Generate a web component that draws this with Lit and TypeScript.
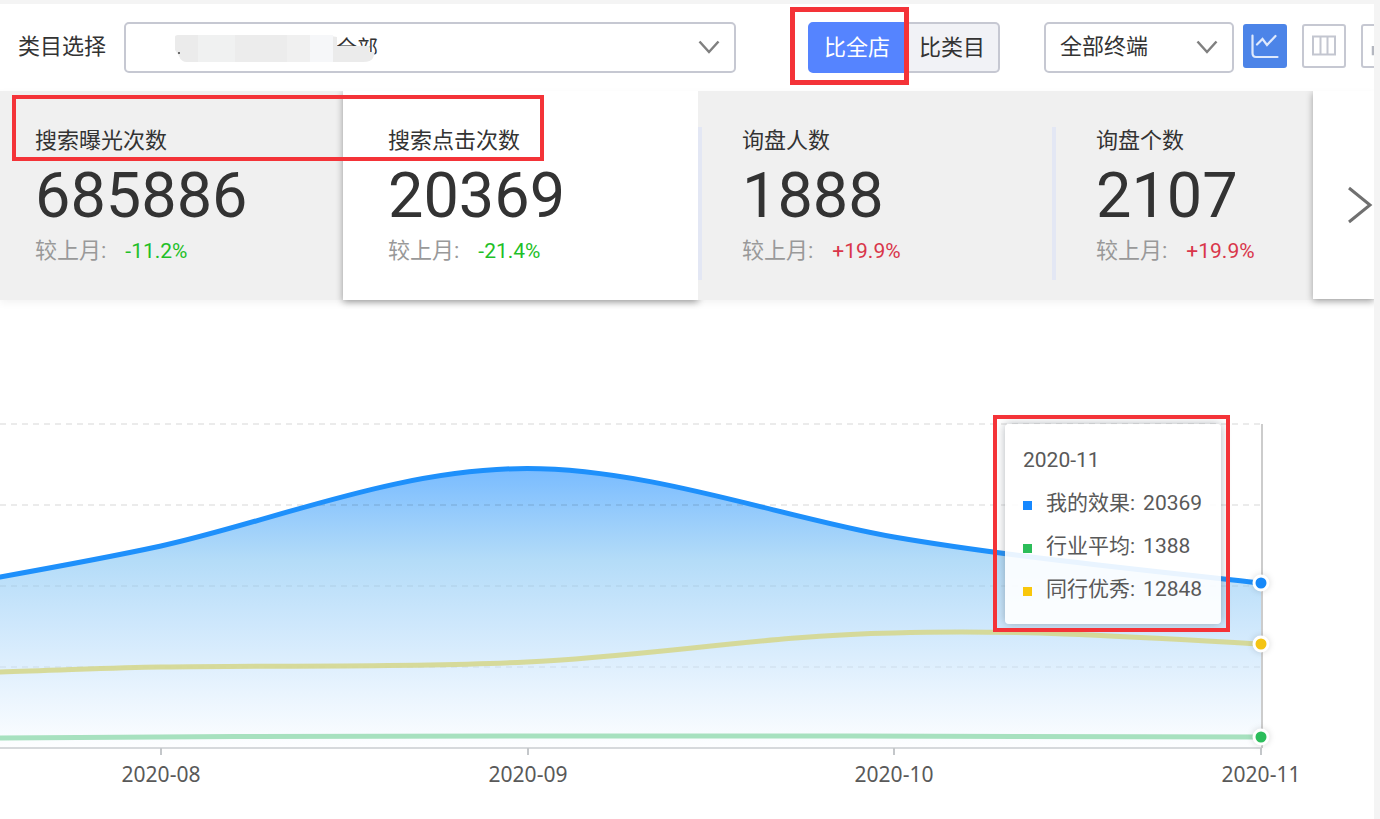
import { LitElement, html, css, svg } from "lit";
import { customElement, state } from "lit/decorators.js";

interface Metric {
  label: string;
  value: string;
  change: string;
}

const METRICS: Metric[] = [
  { label: "搜索曝光次数", value: "685886", change: "-11.2%" },
  { label: "搜索点击次数", value: "20369", change: "-21.4%" },
  { label: "询盘人数", value: "1888", change: "+19.9%" },
  { label: "询盘个数", value: "2107", change: "+19.9%" },
];

const SERIES = [
  { name: "我的效果", value: 20369, tone: "mine" },
  { name: "行业平均", value: 1388, tone: "average" },
  { name: "同行优秀", value: 12848, tone: "top" },
];

const MONTHS = [
  { label: "2020-08", x: 161 },
  { label: "2020-09", x: 528 },
  { label: "2020-10", x: 894 },
  { label: "2020-11", x: 1261 },
];

const MINE_CURVE =
  "M-2 577.5L0 577C50 568 110 557 161 546C271 522 397 468.5 527 468.5C650 468.5 784 518 894 537C1004 556 1150 571 1261 583";

const FONT = css`
  :host {
    font-family: Roboto, "Noto Sans CJK SC", sans-serif;
    font-size: 22px;
    color: #333;
  }
  * {
    box-sizing: border-box;
  }
`;

@customElement("metric-chart")
class MetricChart extends LitElement {
  static styles = [
    FONT,
    css`
      :host {
        display: block;
        position: relative;
      }
      .plot {
        display: block;
        width: 100%;
        height: auto;
      }
      .grid {
        stroke: #000;
        stroke-opacity: 0.08;
        stroke-width: 2;
        stroke-dasharray: 6 5;
      }
      .grid.faint {
        stroke-opacity: 0.04;
      }
      .axis {
        stroke: #d6d9dc;
        stroke-width: 2;
      }
      .tick {
        stroke: #c4c7ca;
        stroke-width: 2;
      }
      .cursor {
        stroke: #ccc;
        stroke-width: 2;
      }
      .line {
        fill: none;
        stroke-width: 5;
      }
      .line.mine {
        stroke: #1e90fb;
      }
      .line.average {
        stroke: #a7e1bf;
      }
      .line.top {
        stroke: #d5d78f;
        stroke-opacity: 0.9;
      }
      .dot {
        stroke: #fff;
        stroke-width: 3;
        filter: drop-shadow(0 0 3px rgba(0, 0, 0, 0.15));
      }
      .dot.mine {
        fill: #1688f8;
      }
      .dot.top {
        fill: #f4c413;
      }
      .dot.average {
        fill: #2bbd5b;
      }
      .month {
        font-family: "Noto Sans", sans-serif;
        font-size: 21px;
        fill: #595959;
        text-anchor: middle;
      }
      .tooltip {
        position: absolute;
        top: 124px;
        right: 153px;
        width: 216px;
        padding: 15px 18px 13px;
        border-radius: 4px;
        background: rgba(255, 255, 255, 0.9);
        box-shadow: 0 0 10px rgba(100, 110, 120, 0.5);
        font-size: 21px;
        line-height: 43px;
        color: #595959;
      }
      .mark {
        position: absolute;
        inset: -9px -9px -8px -12px;
        border: 4px solid #f43338;
        pointer-events: none;
      }
      .rows {
        margin: 0;
        padding: 0;
        list-style: none;
      }
      .row {
        display: flex;
        align-items: center;
        white-space: nowrap;
      }
      .swatch {
        width: 9px;
        height: 9px;
        margin: 4px 14px 0 0;
      }
      .swatch.mine {
        background: #1688ff;
      }
      .swatch.average {
        background: #2cbd59;
      }
      .swatch.top {
        background: #f9c70c;
      }
      .amount {
        margin-left: 8px;
      }
    `,
  ];

  render() {
    return html`
      <svg class="plot" viewBox="0 300 1374 519" role="img" aria-label="搜索点击次数">
        <defs>
          <linearGradient id="fade" gradientUnits="userSpaceOnUse" x1="0" y1="468" x2="0" y2="748">
            <stop offset="0" stop-color="#78bbff" />
            <stop offset="0.33" stop-color="#b4dcf8" />
            <stop offset="0.55" stop-color="#cde7fc" />
            <stop offset="0.8" stop-color="#e9f4fe" />
            <stop offset="1" stop-color="#fdfeff" />
          </linearGradient>
        </defs>
        <path d="${MINE_CURVE}V748H-2Z" fill="url(#fade)" />
        <line class="grid" x1="0" y1="424" x2="1261" y2="424" />
        <line class="grid" x1="0" y1="505" x2="1261" y2="505" />
        <line class="grid faint" x1="0" y1="586" x2="1261" y2="586" />
        <line class="grid faint" x1="0" y1="667" x2="1261" y2="667" />
        <line class="axis" x1="0" y1="748" x2="1262" y2="748" />
        ${MONTHS.map(
          (m) => svg`
            <line class="tick" x1=${m.x} y1="748" x2=${m.x} y2="755" />
            <text class="month" x=${m.x} y="782">${m.label}</text>`
        )}
        <path
          class="line top"
          d="M-2 672C50 671 110 667.500 161 667C283 665 405 668 527 662C650 656 772 635 894 633C1016 629 1139 637 1261 644"
        />
        <path class="line average" d="M-2 738C160 736.500 380 736 527 736C780 736 1000 736 1261 737" />
        <path class="line mine" d=${MINE_CURVE} />
        <line class="cursor" x1="1262" y1="424" x2="1262" y2="748" />
        <circle class="dot mine" cx="1261" cy="583" r="7" />
        <circle class="dot top" cx="1261" cy="644" r="7" />
        <circle class="dot average" cx="1261" cy="737" r="7" />
      </svg>
      <div class="tooltip">
        <div>2020-11</div>
        <ul class="rows">
          ${SERIES.map(
            (s) => html`<li class="row">
              <span class="swatch ${s.tone}"></span><span>${s.name}:</span
              ><span class="amount">${s.value}</span>
            </li>`
          )}
        </ul>
        <span class="mark"></span>
      </div>
    `;
  }
}

@customElement("app-root")
class AppRoot extends LitElement {
  @state() scope = "store";

  static styles = [
    FONT,
    css`
      :host {
        display: block;
        min-height: 100vh;
        padding: 4px 6px 0 0;
        background: #f4f4f4;
      }
      .panel {
        min-height: calc(100vh - 4px);
        overflow: hidden;
        background: #fff;
      }
      select,
      button {
        font: inherit;
        color: inherit;
        margin: 0;
        cursor: pointer;
      }
      .toolbar {
        display: flex;
        align-items: center;
        height: 87px;
        padding-left: 18px;
        margin-right: -31px;
        white-space: nowrap;
      }
      .category-label {
        margin-right: 18px;
        padding-bottom: 8px;
      }
      .picker {
        position: relative;
        width: 190px;
        margin-right: 9px;
      }
      .picker.category {
        flex: 1;
        margin-right: 72px;
      }
      .select {
        display: block;
        width: 100%;
        height: 51px;
        padding: 0 40px 3px 14px;
        border: 2px solid #c6c8d2;
        border-radius: 5px;
        background: #fff;
        appearance: none;
      }
      .category .select {
        padding: 0 40px 0 210px;
        font-size: 21px;
      }
      .arrow {
        position: absolute;
        top: 18px;
        right: 16px;
        pointer-events: none;
      }
      .smudge {
        position: absolute;
        top: 12px;
        left: 51px;
        pointer-events: none;
      }
      .toggle {
        position: relative;
        display: flex;
        margin-right: 44px;
      }
      .option {
        height: 51px;
        padding: 0 13px 6px;
        border: 2px solid #c6c8d2;
        border-left: 0;
        border-radius: 0 5px 5px 0;
        background: #f1f2f6;
      }
      .option:first-child {
        padding: 0 14px 6px;
        border: 2px solid #5584ff;
        border-radius: 5px 0 0 5px;
      }
      .option[aria-pressed="true"] {
        color: #fff;
        background: #5584ff;
      }
      .mark {
        position: absolute;
        border: 4px solid #f43338;
        pointer-events: none;
      }
      .toggle .mark {
        inset: -15px 91px -12px -18px;
        border-width: 5px;
      }
      .views {
        display: flex;
        gap: 15px;
        margin-bottom: 3px;
      }
      .view {
        width: 44px;
        height: 44px;
        padding: 0;
        border: 2px solid #c6c8d2;
        border-radius: 3px;
        background: #fff;
      }
      .view.active {
        border-color: #4c84e8;
        background: #4c84e8;
      }
      .view svg {
        display: block;
      }
      .cards {
        position: relative;
        display: grid;
        grid-template-columns: 343fr 355fr 354fr 261fr 61px;
        background: #f0f0f0;
        box-shadow: 0 3px 8px rgba(0, 0, 0, 0.05);
      }
      .card {
        position: relative;
        height: 209px;
        padding: 35px 0 0 45px;
        background: #f0f0f0;
        line-height: 30px;
        white-space: nowrap;
      }
      .card:first-child {
        padding-left: 35px;
      }
      .card.current {
        background: #fff;
        box-shadow: 0 2px 7px rgba(0, 0, 0, 0.38);
        clip-path: inset(0 -8px -12px -12px);
      }
      .card.divided {
        padding-left: 44px;
      }
      .card.divided::before {
        content: "";
        position: absolute;
        top: 36px;
        left: 0;
        width: 4px;
        height: 153px;
        background: #e3e7f4;
      }
      .value {
        font-size: 63px;
        line-height: 80px;
      }
      .compare {
        display: flex;
        gap: 19px;
        color: #999;
      }
      .change {
        font-size: 21px;
        color: #d9364a;
      }
      .change.down {
        color: #1fbf28;
      }
      .cards > .mark {
        top: 4px;
        left: 12px;
        width: 532px;
        height: 66px;
      }
      .next {
        position: relative;
        height: 208px;
        padding: 20px 0 0 34px;
        border: 0;
        background: #fff;
        box-shadow: 0 2px 7px rgba(0, 0, 0, 0.35);
        clip-path: inset(0 0 -12px -12px);
      }
      .next svg {
        display: block;
      }
    `,
  ];

  private arrow() {
    return html`<svg class="arrow" width="22" height="14" viewBox="0 0 22 14" fill="none" stroke="#808080" stroke-width="2.500">
      <path d="M1.500 1.500L11 12L20.500 1.500" />
    </svg>`;
  }

  render() {
    return html`
      <main class="panel">
        <div class="toolbar">
          <label class="category-label" for="category">类目选择</label>
          <div class="picker category">
            <select class="select" id="category">
              <option>全部</option>
            </select>
            <svg class="smudge" width="204" height="30" viewBox="0 0 204 30">
              <path d="M0 3Q0 1 3 1H150L162 3V12H194V18H200L198 24Q196 28 188 28H12Q6 28 4 22L0 16Z" fill="#ebebeb" />
              <path d="M23 1H60V28H23Z" fill="#f0f1f1" />
              <path d="M60 1H112V28H60Z" fill="#ececec" />
              <path d="M112 1H135V28H112Z" fill="#f0f0f0" />
              <path d="M135 1H158V28H135Z" fill="#f6f7f9" />
              <circle cx="4" cy="19" r="1" fill="#444" />
            </svg>
            ${this.arrow()}
          </div>
          <div class="toggle">
            <button
              class="option"
              aria-pressed=${this.scope === "store"}
              @click=${() => (this.scope = "store")}
            >比全店</button>
            <button
              class="option"
              aria-pressed=${this.scope === "category"}
              @click=${() => (this.scope = "category")}
            >比类目</button>
            <span class="mark"></span>
          </div>
          <div class="picker">
            <select class="select" aria-label="终端">
              <option>全部终端</option>
            </select>
            ${this.arrow()}
          </div>
          <div class="views">
            <button class="view active" aria-label="折线图">
              <svg width="40" height="40" viewBox="0 0 40 40" fill="none" stroke="#dfe9fc" stroke-width="2.200" stroke-linecap="round">
                <path d="M7.500 9.500V27Q7.500 31 11 31H32.500M12 18.500L17.500 13L22 19L30.500 10" />
              </svg>
            </button>
            <button class="view" aria-label="表格">
              <svg width="40" height="40" viewBox="0 0 40 40" fill="none" stroke="#c3c6d0" stroke-width="2">
                <path d="M9 10.500H31V28.500H9ZM16.500 10.500V28.500M23.500 10.500V28.500" />
              </svg>
            </button>
            <button class="view" aria-label="下载">
              <svg width="40" height="40" viewBox="0 0 40 40" fill="none" stroke="#b4b7c0" stroke-width="2.500">
                <path d="M10 20V28H30V20M20 8V22M14 17L20 23L26 17" />
              </svg>
            </button>
          </div>
        </div>
        <section class="cards">
          ${METRICS.map(
            (m, i) => html`<article class="card ${i === 1 ? "current" : ""} ${i > 1 ? "divided" : ""}">
              <div>${m.label}</div>
              <div class="value">${m.value}</div>
              <div class="compare">
                <span>较上月:</span>
                <span class="change ${m.change.startsWith("-") ? "down" : ""}">${m.change}</span>
              </div>
            </article>`
          )}
          <button class="next" aria-label="下一页">
            <svg width="26" height="38" viewBox="0 0 26 38" fill="none" stroke="#707070" stroke-width="3">
              <path d="M2 2L23 19L2 36" />
            </svg>
          </button>
          <span class="mark"></span>
        </section>
        <metric-chart></metric-chart>
      </main>
    `;
  }
}
